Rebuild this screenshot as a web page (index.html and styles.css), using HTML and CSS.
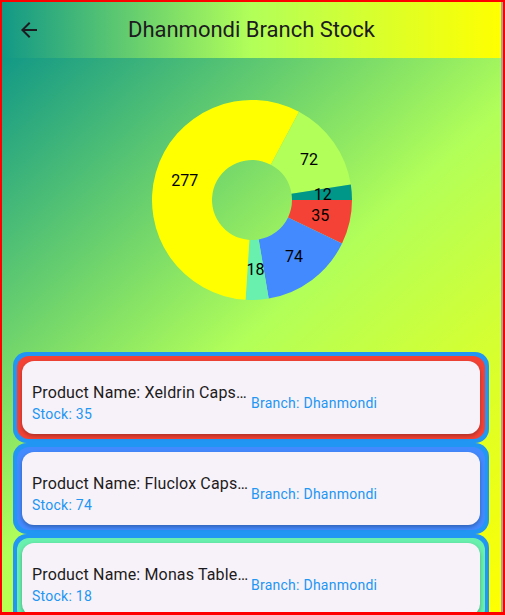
FILE: index.html
```html
<!DOCTYPE html>
<html lang="en">
<head>
<meta charset="utf-8">
<title>Dhanmondi Branch Stock</title>
<link rel="stylesheet" href="styles.css">
</head>
<body>
<div class="screen">
  <div class="viewport">
    <header class="appbar">
      <button class="back" aria-label="Back">
        <svg viewBox="0 0 24 24" width="24" height="24"><path d="M20 11H7.83l5.59-5.59L12 4l-8 8 8 8 1.41-1.41L7.83 13H20v-2z" fill="#1d1b20"/></svg>
      </button>
      <h1 class="title">Dhanmondi Branch Stock</h1>
      <span class="spacer"></span>
    </header>
    <main class="content">
      <section class="chart">
        <svg class="pie" viewBox="0 0 200 200" width="200" height="200">
          <path fill="#f44336" d="M200,100 A100,100 0 0 1 190.02,143.56 L136.01,117.42 A40,40 0 0 0 140,100 Z"/>
          <path fill="#448aff" d="M190.02,143.56 A100,100 0 0 1 116.66,198.60 L106.66,139.44 A40,40 0 0 0 136.01,117.42 Z"/>
          <path fill="#69f0ae" d="M116.66,198.60 A100,100 0 0 1 93.56,199.79 L97.42,139.92 A40,40 0 0 0 106.66,139.44 Z"/>
          <path fill="#ffff00" d="M93.56,199.79 A100,100 0 1 1 147.00,11.73 L118.80,64.69 A40,40 0 1 0 97.42,139.92 Z"/>
          <path fill="#b2ff59" d="M147.00,11.73 A100,100 0 0 1 198.81,84.61 L139.52,93.84 A40,40 0 0 0 118.80,64.69 Z"/>
          <path fill="#009688" d="M198.81,84.61 A100,100 0 0 1 200,100 L140,100 A40,40 0 0 0 139.52,93.84 Z"/>
          <g class="pie-labels">
            <text x="168.2" y="115.6">35</text>
            <text x="142.0" y="156.0">74</text>
            <text x="103.6" y="169.9">18</text>
            <text x="32.7" y="80.9">277</text>
            <text x="157.1" y="59.4">72</text>
            <text x="170.8" y="94.0">12</text>
          </g>
        </svg>
      </section>
      <ul class="list">
        <li class="stock-item">
          <div class="ring ring-red">
            <div class="card">
              <div class="info">
                <p class="name">Product Name: Xeldrin Capsule 20 mg</p>
                <p class="stock">Stock: 35</p>
              </div>
              <p class="branch">Branch: Dhanmondi</p>
            </div>
          </div>
        </li>
        <li class="stock-item">
          <div class="ring ring-blue">
            <div class="card">
              <div class="info">
                <p class="name">Product Name: Fluclox Capsule 500 mg</p>
                <p class="stock">Stock: 74</p>
              </div>
              <p class="branch">Branch: Dhanmondi</p>
            </div>
          </div>
        </li>
        <li class="stock-item">
          <div class="ring ring-green">
            <div class="card">
              <div class="info">
                <p class="name">Product Name: Monas Tablet 10 mg</p>
                <p class="stock">Stock: 18</p>
              </div>
              <p class="branch">Branch: Dhanmondi</p>
            </div>
          </div>
        </li>
      </ul>
    </main>
  </div>
</div>
</body>
</html>
```

FILE: styles.css
```css
* { box-sizing: border-box; }

html, body {
  margin: 0;
  padding: 0;
}

body {
  width: 505px;
  height: 615px;
  overflow: hidden;
  font-family: Roboto, "Noto Sans", sans-serif;
}

.screen {
  width: 505px;
  height: 615px;
  border: 2px solid #ff0000;
  border-bottom-width: 3px;
}

.viewport {
  height: 100%;
  display: flex;
  flex-direction: column;
  overflow: hidden;
  border-right: 2px solid #a4a4a4;
}

.appbar {
  flex: 0 0 56px;
  display: grid;
  grid-template-columns: 56px 1fr 56px;
  align-items: center;
  background: linear-gradient(to right, #129886 0%, #b2ff59 50%, #ffff00 100%);
}

.back {
  width: 56px;
  height: 56px;
  padding: 0;
  border: 0;
  background: transparent;
  display: flex;
  align-items: center;
  justify-content: center;
}

.back svg {
  display: block;
  margin-left: -2px;
}

.title {
  margin: 0;
  text-align: center;
  font-size: 22px;
  font-weight: 400;
  line-height: 28px;
  color: #1d1b20;
}

.content {
  flex: 1;
  background: linear-gradient(138deg, #129886 0%, #b2ff59 50%, #ffff00 100%);
  overflow: hidden;
}

.chart {
  height: 284px;
  display: flex;
  align-items: center;
  justify-content: center;
}

.pie {
  display: block;
  margin-left: 1px;
}

.pie-labels text {
  font-family: Roboto, sans-serif;
  font-size: 16px;
  fill: #000;
  text-anchor: middle;
  dominant-baseline: central;
}

.list {
  list-style: none;
  margin: 0;
  padding: 10px 12px 0 11px;
}

.stock-item {
  background: #2196f3;
  border-radius: 14px;
  padding: 4px;
}

.ring {
  border-radius: 12px;
  padding: 5px;
}

.ring-red { background: #f44336; }
.ring-blue { background: #448aff; }
.ring-green { background: #69f0ae; }

.card {
  display: flex;
  align-items: center;
  background: #f7f2fa;
  border-radius: 12px;
  padding: 20px 10px 10px;
  box-shadow: 0 2px 4px rgba(0, 0, 0, 0.3);
}

.info {
  flex: 1 1 0;
  min-width: 0;
}

.name {
  margin: 0;
  font-size: 16px;
  line-height: 23px;
  letter-spacing: 0.15px;
  color: #1d1b20;
  white-space: nowrap;
  overflow: hidden;
  text-overflow: ellipsis;
}

.stock {
  margin: 0;
  font-size: 14px;
  line-height: 20px;
  letter-spacing: 0.25px;
  color: #2196f3;
}

.branch {
  flex: 1 1 0;
  margin: 0;
  font-size: 14px;
  line-height: 20px;
  letter-spacing: 0.25px;
  color: #2196f3;
  white-space: nowrap;
}
```
